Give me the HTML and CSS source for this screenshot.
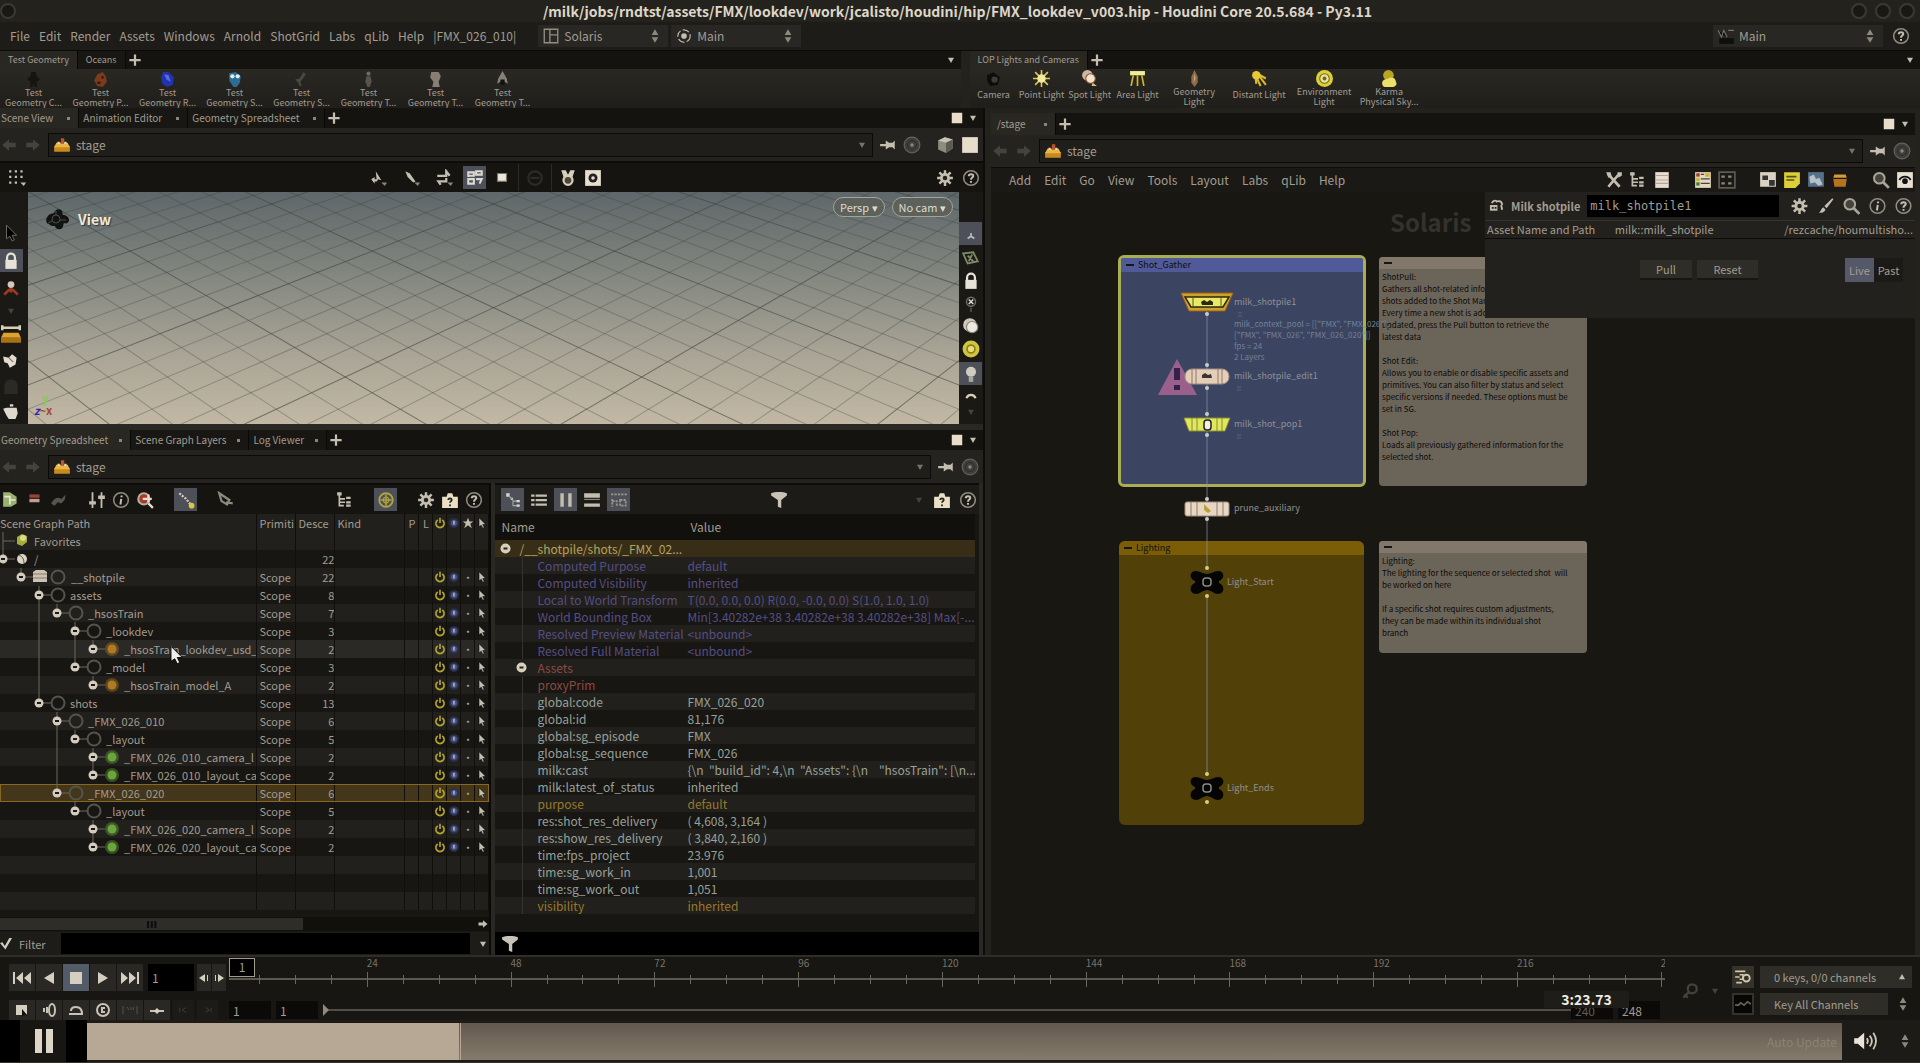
FILE: index.html
```html
<!DOCTYPE html>
<html lang="en">

<head>
    <meta charset="UTF-8">
    <meta name="viewport" content="width=device-width, initial-scale=1.0">
    <title>FMX_lookdev_v003.hip - Houdini Core</title>
    <link rel="stylesheet" href="styles.css">
</head>

<body>
    <!-- Icon set, used everywhere through <use> -->
    <svg class="sprite" aria-hidden="true">
        <symbol id="i-back" viewBox="0 0 16 16"><path fill="currentColor" d="M2 8l6-5v3h6v4H8v3z"/></symbol>
        <symbol id="i-fwd" viewBox="0 0 16 16"><path fill="currentColor" d="M14 8L8 3v3H2v4h6v3z"/></symbol>
        <symbol id="i-stage" viewBox="0 0 16 16"><path fill="#c98a1c" d="M1 9h14v5H1z"/><path fill="#e9b64a" d="M3 6h10l2 4H1z"/><path fill="#b9552f" d="M7 2h3v5H7z"/><path fill="#e8d9b0" d="M4 5h2v2H4zM10 5h2v2h-2z"/></symbol>
        <symbol id="i-pin" viewBox="0 0 16 16"><path fill="currentColor" d="M1 7h5V4l3 2h3l2-2v8l-2-2H9l-3 2V9H1z"/></symbol>
        <symbol id="i-target" viewBox="0 0 16 16"><circle cx="8" cy="8" r="7" fill="#3f3f3c" stroke="#62625d"/><circle cx="8" cy="8" r="4" fill="none" stroke="#2d2d2b"/><circle cx="8" cy="8" r="1.500" fill="#888"/></symbol>
        <symbol id="i-cube" viewBox="0 0 16 16"><path fill="#8e8b80" d="M1 4l6-3 7 2v8l-6 4-7-3z"/><path fill="#c9c4b8" d="M1 4l7 2 6-3-7-2z"/><path fill="#5d5b54" d="M8 6v9l6-4V3z"/></symbol>
        <symbol id="i-square" viewBox="0 0 16 16"><path fill="#e8dccb" d="M1 1h14v14H1z"/></symbol>
        <symbol id="i-plus" viewBox="0 0 16 16"><path fill="currentColor" d="M7 3h2v4h4v2H9v4H7V9H3V7h4z"/></symbol>
        <symbol id="i-down" viewBox="0 0 16 16"><path fill="currentColor" d="M4 5h8l-4 7z"/></symbol>
        <symbol id="i-up" viewBox="0 0 16 16"><path fill="currentColor" d="M4 11h8L8 4z"/></symbol>
        <symbol id="i-updown" viewBox="0 0 16 16"><path fill="#8d887c" d="M5 7h6L8 2zM5 9h6l-3 5z"/></symbol>
        <symbol id="i-gear" viewBox="0 0 16 16"><path stroke="currentColor" stroke-width="2.200" d="M8 1v14M1 8h14M3 3l10 10M13 3L3 13"/><circle cx="8" cy="8" r="4.500" fill="currentColor"/><circle cx="8" cy="8" r="2" fill="#24231f"/></symbol>
        <symbol id="i-help" viewBox="0 0 16 16"><circle cx="8" cy="8" r="6.500" fill="none" stroke="#8f8b80" stroke-width="1.400"/><path fill="none" stroke="currentColor" stroke-width="1.800" d="M6 6.500C6 4 10.200 4 10 6.300 9.800 7.700 8 7.600 8 9.500M8 10.700v1.600"/></symbol>
        <symbol id="i-info" viewBox="0 0 16 16"><circle cx="8" cy="8" r="6.500" fill="none" stroke="#8f8b80" stroke-width="1.400"/><path stroke="currentColor" stroke-width="1.800" d="M8.500 4v1.600M8.200 7l-.7 5"/></symbol>
        <symbol id="i-dots" viewBox="0 0 16 16"><path fill="currentColor" d="M1 1h2v2H1zM6 1h2v2H6zM11 1h2v2h-2zM1 6h2v2H1zM6 6h2v2H6zM11 6h2v2h-2zM1 11h2v2H1zM6 11h2v2H6zM11 12h5l-2 3z"/></symbol>
        <symbol id="i-tool-a" viewBox="0 0 16 16"><path fill="currentColor" d="M6 2l5 8-3-1-1 2zM2 9l3-2v2h2v2H5v2z"/><path fill="#8a867a" d="M11 12h5l-2 3z"/></symbol>
        <symbol id="i-tool-b" viewBox="0 0 16 16"><path fill="currentColor" d="M3 2l4 2 5 7-2 1-5-5z"/><path fill="#8a867a" d="M11 12h5l-2 3z"/></symbol>
        <symbol id="i-tool-c" viewBox="0 0 16 16"><path fill="none" stroke="currentColor" stroke-width="2" d="M2 6h8V2l3 4M10 8v3H3l2 3"/><path fill="#8a867a" d="M11 12h5l-2 3z"/></symbol>
        <symbol id="i-mesh" viewBox="0 0 16 16"><path fill="none" stroke="#dcdad2" stroke-width="1.800" d="M2 7V3h5v3H2M9 6V2h5v3H9M2 13V9h5v4zM9 9h5l-2 4"/></symbol>
        <symbol id="i-box" viewBox="0 0 16 16"><path fill="#eee6d8" stroke="#77746a" d="M4 4h8v7H4z"/></symbol>
        <symbol id="i-medal" viewBox="0 0 16 16"><path fill="#d8cfbc" d="M2 1h4l2 4 2-4h4l-2 6H4z"/><circle cx="8" cy="10" r="4" fill="#4d4637" stroke="#d8cfbc" stroke-width="2"/></symbol>
        <symbol id="i-camset" viewBox="0 0 16 16"><path fill="#e8dfcf" d="M1 1h14v14H1z"/><circle cx="8" cy="8" r="4" fill="#222"/><circle cx="8" cy="8" r="1.600" fill="#e8dfcf"/></symbol>
        <symbol id="i-dim" viewBox="0 0 16 16"><circle cx="8" cy="8" r="6" fill="none" stroke="#2c2b27" stroke-width="2"/><path stroke="#2c2b27" stroke-width="2" d="M4 8h8"/></symbol>
        <symbol id="i-cursor" viewBox="0 0 16 16"><path fill="currentColor" stroke="#000" stroke-width=".7" d="M4 1v12l3-2 2 4 2-1-2-4h4z"/></symbol>
        <symbol id="i-cursor-dark" viewBox="0 0 16 16"><path fill="#000" stroke="#77746b" stroke-width=".8" d="M4 1v12l3-2 2 4 2-1-2-4h4z"/></symbol>
        <symbol id="i-lock" viewBox="0 0 16 16"><path fill="none" stroke="#e6e2d8" stroke-width="2" d="M4.500 8V5a3.500 3.500 0 017 0v3"/><path fill="#e6e2d8" d="M3 7h10v8H3z"/></symbol>
        <symbol id="i-pose" viewBox="0 0 16 16"><circle cx="8" cy="4" r="3" fill="#d8c6b8"/><path fill="none" stroke="#9c3a20" stroke-width="2.500" d="M2 13l4-4h4l4 4M8 7v4"/></symbol>
        <symbol id="i-brick" viewBox="0 0 16 16"><path fill="#d8cfb8" d="M0 1h2v1h12V1h2v4h-2V4H2v1H0z"/><path fill="#e0a22c" d="M2 7h12l2 4H0z"/><path fill="#a87214" d="M0 11h16v4H0z"/></symbol>
        <symbol id="i-stamp" viewBox="0 0 16 16"><path fill="#e3dccf" d="M1 4l5 1 3-3 4 3-1 6-5 3-2-4-3-1z"/><path stroke="#77716a" d="M6 5l4 4"/></symbol>
        <symbol id="i-ghost" viewBox="0 0 16 16"><path fill="#2b2a25" d="M2 15V8a6 6 0 0112 0v7z"/></symbol>
        <symbol id="i-pot" viewBox="0 0 16 16"><path fill="#ded9cc" d="M4 5h9l1 5-2 5H6L4 12 1 6zM7 2h3v2H7z"/></symbol>
        <symbol id="i-hand" viewBox="0 0 16 16"><path fill="none" stroke="#7d8a66" stroke-width="1.600" d="M1 3l9-1 4 8-9 2zM5 5l5 5M9 4l-3 6"/></symbol>
        <symbol id="i-bulbx" viewBox="0 0 16 16"><circle cx="8" cy="6" r="4" fill="none" stroke="#6d6a61" stroke-width="1.300"/><path stroke="#ddd" stroke-width="1.300" d="M6 4l4 4M10 4L6 8"/><path stroke="#6d6a61" d="M8 11v4"/></symbol>
        <symbol id="i-ball" viewBox="0 0 16 16"><circle cx="7" cy="7" r="6" fill="#cfc8ba"/><circle cx="9" cy="9" r="5" fill="#eee9de" stroke="#8a8579"/></symbol>
        <symbol id="i-ylamp" viewBox="0 0 16 16"><circle cx="8" cy="8" r="7.500" fill="#d0c53c"/><circle cx="8" cy="8" r="3.500" fill="#e6de7b" stroke="#8b821a" stroke-width="1.500"/></symbol>
        <symbol id="i-bulb" viewBox="0 0 16 16"><circle cx="8" cy="6" r="4.500" fill="#cfccbf"/><path fill="#aaa89c" d="M6 10h4v5H6z"/></symbol>
        <symbol id="i-arc" viewBox="0 0 16 16"><path fill="none" stroke="#d6d0b5" stroke-width="3" d="M2 11c2-6 10-6 12 0"/></symbol>
        <symbol id="i-axis" viewBox="0 0 16 16"><path stroke="#b9bcc6" stroke-width="1.500" d="M8 10V7M8 10l3 2M8 10l-3 2"/></symbol>
        <symbol id="i-prims" viewBox="0 0 16 16"><path fill="#9bb070" d="M1 1h6l6 4v6l-5 3H1z"/><path stroke="#e6e8d2" stroke-width="1.500" fill="none" d="M2 5h5v7M7 8h5"/></symbol>
        <symbol id="i-red" viewBox="0 0 16 16"><path fill="#93473c" d="M3 3h9v3H3z"/><path fill="#c99a8f" d="M3 7h9v3H3z"/></symbol>
        <symbol id="i-dolphin" viewBox="0 0 16 16"><path fill="#55544d" d="M1 11c3-5 6-6 9-4l4-4-1 5-3 3-3-1-3 3z"/></symbol>
        <symbol id="i-sliders" viewBox="0 0 16 16"><path stroke="currentColor" stroke-width="1.600" d="M4 1v14M12 1v14"/><path fill="currentColor" d="M1 9h6v3H1zM9 4h6v3H9z"/></symbol>
        <symbol id="i-find" viewBox="0 0 16 16"><circle cx="6.500" cy="6.500" r="4.700" fill="#45433d" stroke="#aaa598" stroke-width="1.800"/><path stroke="#aaa598" stroke-width="2.500" d="M10 10l5 5"/></symbol>
        <symbol id="i-findred" viewBox="0 0 16 16"><circle cx="7" cy="7" r="5" fill="#a33c2a" stroke="#b9b0a5" stroke-width="1.800"/><path stroke="#e6ddd0" stroke-width="2" d="M11 11l4 4M6 7h8M11 3v7"/></symbol>
        <symbol id="i-chain" viewBox="0 0 16 16"><path stroke="#cfcbbb" stroke-width="2" stroke-dasharray="2 1" d="M2 2l6 5 5 6"/><circle cx="13" cy="13" r="2.500" fill="#d9c840"/></symbol>
        <symbol id="i-nodes" viewBox="0 0 16 16"><path fill="#dcd9cf" d="M2 2h3v3H2zM6 6h2v2H6zM11 8h3v2h-3zM11 12h3v2h-3z"/><path fill="none" stroke="#a9a698" d="M4 4l4 4v5h3M8 9h3"/></symbol>
        <symbol id="i-tag" viewBox="0 0 16 16"><path fill="none" stroke="#8d897d" stroke-width="2" d="M2 2l9 6-2 4-5-3zM8 10l6 1"/></symbol>
        <symbol id="i-tree" viewBox="0 0 16 16"><path fill="none" stroke="currentColor" stroke-width="1.500" d="M3 3v10h4M3 7h5M3 10h5"/><path fill="currentColor" d="M1 1h4v3H1zM9 5h4v2H9zM9 9h4v2H9zM9 12h4v2H9z"/></symbol>
        <symbol id="i-globe" viewBox="0 0 16 16"><circle cx="8" cy="8" r="6" fill="none" stroke="#b0a43e" stroke-width="1.600"/><path stroke="#b0a43e" fill="none" stroke-width="1.300" d="M3 8h10M8 3v10"/><circle cx="8" cy="8" r="2.500" fill="none" stroke="#b0a43e"/></symbol>
        <symbol id="i-camhelp" viewBox="0 0 16 16"><path fill="#ece0c4" d="M1 5h4l1-3h4l1 3h4v10H1z"/><path fill="none" stroke="#222" stroke-width="1.600" d="M6.500 8c0-2 3-2 3 0 0 1-1.500 1-1.500 2.500M8 12v1.500"/></symbol>
        <symbol id="i-list" viewBox="0 0 16 16"><path fill="currentColor" d="M1 3h3v2H1zM5 3h10v2H5zM1 7h3v2H1zM5 7h10v2H5zM1 11h3v2H1zM5 11h10v2H5z"/></symbol>
        <symbol id="i-cols" viewBox="0 0 16 16"><path fill="currentColor" d="M3 2h3v12H3zM10 2h3v12h-3z"/></symbol>
        <symbol id="i-rows" viewBox="0 0 16 16"><path fill="currentColor" d="M1 2h14v4H1zM1 11h14v3H1z"/><path fill="#8c8878" d="M1 7h14v1H1z"/></symbol>
        <symbol id="i-grid" viewBox="0 0 16 16"><path fill="none" stroke="#9a978c" stroke-width="1.600" stroke-dasharray="2 1" d="M1 3h14M2 7v7M2 9h4v5M9 8h5v5H9z"/></symbol>
        <symbol id="i-funnel" viewBox="0 0 16 16"><path fill="#c9c3b7" d="M1 2c3-1.500 11-1.500 14 0v2l-5 4v7l-3-1V8L1 4z"/></symbol>
        <symbol id="i-power" viewBox="0 0 16 16"><path fill="none" stroke="#b3a42b" stroke-width="2.200" d="M5 4a5.500 5.500 0 106 0M8 1v7"/></symbol>
        <symbol id="i-eye" viewBox="0 0 16 16"><circle cx="8" cy="8" r="6.500" fill="#2a3153"/><circle cx="8" cy="8" r="4" fill="#4c5580"/><path fill="#b5b9d0" d="M7 5h2v5H7z"/></symbol>
        <symbol id="i-star" viewBox="0 0 16 16"><path fill="currentColor" d="M8 1l2 5h5l-4 3 2 6-5-4-5 4 2-6-4-3h5z"/></symbol>
        <symbol id="i-tools" viewBox="0 0 16 16"><path stroke="currentColor" stroke-width="2.400" d="M3 3l10 11M13 2L3 14"/><path fill="currentColor" d="M1 1h4l1 4-3 1zM11 1h4v3l-3 2z"/></symbol>
        <symbol id="i-sheet" viewBox="0 0 16 16"><path fill="#e9dfd0" d="M2 1h12v14H2z"/><path stroke="#b5a598" d="M2 4h12M2 8h12M2 11h12"/></symbol>
        <symbol id="i-palette" viewBox="0 0 16 16"><path fill="#e3d7bd" d="M1 1h14v14H1z"/><path fill="#a03b2c" d="M2 2h3v3H2z"/><path fill="#cfb32f" d="M2 6h3v3H2zM10 2h4v3h-4z"/><path fill="#4c7a3d" d="M2 10h3v3H2z"/><path stroke="#444" d="M6 3h3M6 7h8M6 11h8"/></symbol>
        <symbol id="i-gridbox" viewBox="0 0 16 16"><path fill="none" stroke="#5d5a52" stroke-width="1.500" d="M1 1h14v14H1z"/><path fill="#8a867a" d="M3 4h3v2H3zM9 4h3v2H9zM3 10h3v2H3zM9 10h3v2H9z"/></symbol>
        <symbol id="i-netbox" viewBox="0 0 16 16"><path fill="#d9d2c4" d="M1 1h14v13H1z"/><path fill="#333" d="M3 4h5v4H3zM9 8h5v5H9z"/></symbol>
        <symbol id="i-note" viewBox="0 0 16 16"><path fill="#dccf38" d="M1 1h14v10l-4 4H1z"/><path stroke="#555020" stroke-width="1.500" d="M3 5h9M3 8h7"/></symbol>
        <symbol id="i-image" viewBox="0 0 16 16"><path fill="#56708c" d="M1 1h14v13H1z"/><path fill="#b6c0c8" d="M2 5l4-2 2 4 3-1 3 6-4 1-3-3-4 1z"/></symbol>
        <symbol id="i-basket" viewBox="0 0 16 16"><path fill="#b5731c" d="M2 7h12l-1 7H3z"/><path fill="#d39a3e" d="M3 3h10l1 3H2z"/></symbol>
        <symbol id="i-home" viewBox="0 0 16 16"><path fill="#e8e0d2" d="M1 1h14v14H1z"/><path fill="none" stroke="#111" stroke-width="1.600" d="M3 8c2-4 8-4 10 0"/><circle cx="8" cy="9" r="2.500" fill="#111"/></symbol>
        <symbol id="i-brush" viewBox="0 0 16 16"><path fill="currentColor" d="M14 1l1 1-6 8-2-2zM6 9l2 2c-1 3-4 3-6 3 2-1 2-4 4-5z"/></symbol>
        <symbol id="i-key" viewBox="0 0 16 16"><circle cx="10" cy="6" r="4" fill="none" stroke="currentColor" stroke-width="2"/><path stroke="currentColor" stroke-width="2" d="M7 9l-5 5M3 11l3 3"/></symbol>
        <symbol id="i-pile" viewBox="0 0 16 16"><path fill="currentColor" d="M1 7h8v6H1z"/><path fill="none" stroke="currentColor" stroke-width="2" d="M3 5c2-4 5-3 6-1M9 3c4-1 5 2 5 4M13 7l1 5"/><path fill="#23211d" d="M3 9h2v2H3zM6 9h2v2H6z"/></symbol>
        <symbol id="i-chan" viewBox="0 0 16 16"><path fill="none" stroke="#cfc9a8" stroke-width="1.400" d="M1 3h9M1 8h4M2 13h5M5 6h3v4H5"/><circle cx="11" cy="9" r="3" fill="none" stroke="#cfc9a8" stroke-width="1.600"/></symbol>
        <symbol id="i-wave" viewBox="0 0 16 16"><path fill="#070706" d="M0 0h16v16H0z"/><path fill="none" stroke="#65645c" stroke-width="1.500" d="M1 9h3l2-2 3 2 3-3 3 2"/></symbol>
        <symbol id="i-desk" viewBox="0 0 16 16"><path fill="none" stroke="#918d81" stroke-width="1.200" d="M2 2h12v12H2zM7 2v12M7 7h7"/></symbol>
        <symbol id="i-radial" viewBox="0 0 16 16"><circle cx="8" cy="8" r="5.500" fill="none" stroke="currentColor" stroke-dasharray="6 2"/><circle cx="8" cy="8" r="2.500" fill="currentColor"/></symbol>
        <symbol id="i-take" viewBox="0 0 16 16"><path stroke="#77736a" d="M1 3l3 6 2-6 3 6M10 3h5"/><path fill="#0e0e0c" d="M2 10h13v5H2z"/></symbol>
        <!-- test geometry -->
        <symbol id="g-crag" viewBox="0 0 16 16"><path fill="#15140f" d="M6 1h4l1 4 3 3-3 2v5H9l-1-4-1 4H5v-5L2 8l3-3z"/></symbol>
        <symbol id="g-pig" viewBox="0 0 16 16"><path fill="#7c3a1e" d="M5 3l5-2 3 4 1 5-4 5-5-1-3-5z"/><path fill="#24170f" d="M9 5h2v2H9zM5 10h3v2H5z"/></symbol>
        <symbol id="g-rubber" viewBox="0 0 16 16"><path fill="#2233b0" d="M4 1h5l5 5-1 7-5 2-5-3-1-6z"/><path fill="#5a6be0" d="M5 3l4 1 2 6-4-2z"/></symbol>
        <symbol id="g-squab" viewBox="0 0 16 16"><path fill="#2d6c94" d="M3 2l6-1 5 4-1 6-3 4H7L3 9z"/><circle cx="6" cy="5" r="2" fill="#e3eef0"/><circle cx="11" cy="5" r="2" fill="#e3eef0"/></symbol>
        <symbol id="g-bug" viewBox="0 0 16 16"><path fill="#4a4841" d="M10 1l2 2-2 3-3 4 1 4H6l-1-3-3-3 4-1z"/></symbol>
        <symbol id="g-man" viewBox="0 0 16 16"><circle cx="8" cy="2.500" r="2" fill="#6d6a62"/><path fill="#57544d" d="M6 5h4l1 5-2 5H7l-2-5z"/></symbol>
        <symbol id="g-head" viewBox="0 0 16 16"><path fill="#877f73" d="M4 1h7l2 4-2 5 1 5H5l1-5-3-4z"/></symbol>
        <symbol id="g-bust" viewBox="0 0 16 16"><path fill="#85807a" d="M8 0l4 7 1 5-3-2H6l-3 2 1-5z"/><path fill="#14130f" d="M6 8h4v5H6z"/></symbol>
        <!-- lights -->
        <symbol id="l-cam" viewBox="0 0 16 16"><path fill="#0d0c0a" d="M2 5l6-3 6 5-2 7-7 1-3-5z"/><circle cx="9" cy="9" r="3" fill="#3c3b38"/></symbol>
        <symbol id="l-point" viewBox="0 0 16 16"><path stroke="#d9c95a" stroke-width="1.500" d="M8 0v16M0 8h16M2 2l12 12M14 2L2 14"/><circle cx="8" cy="8" r="4" fill="#f2e99c"/></symbol>
        <symbol id="l-spot" viewBox="0 0 16 16"><circle cx="6" cy="5" r="5" fill="#c9b7a0"/><circle cx="9" cy="8" r="4.500" fill="#efe4cf" stroke="#8a4a30"/><path fill="#d5c580" d="M11 12l4 3h-5z"/></symbol>
        <symbol id="l-area" viewBox="0 0 16 16"><path fill="#f3ee96" d="M1 1h14v4H1z"/><path stroke="#cdb52c" stroke-width="1.600" d="M4 5l-2 10M8 5v10M12 5l2 10"/></symbol>
        <symbol id="l-geo" viewBox="0 0 16 16"><path fill="#8a6b4a" d="M8 0l3 6v6l-3 4-3-4V6z"/><path fill="#c8a77d" d="M8 3l1 5-2 4z"/></symbol>
        <symbol id="l-dist" viewBox="0 0 16 16"><path stroke="#d6b82b" stroke-width="2" d="M3 2l6 13M5 2l9 12M4 4l1 9M7 4l7 4"/><circle cx="5" cy="5" r="4" fill="#e5ca35"/></symbol>
        <symbol id="l-env" viewBox="0 0 16 16"><circle cx="8" cy="8" r="8" fill="#dfcf35"/><circle cx="8" cy="8" r="4.500" fill="#e9e3a0" stroke="#6d6720"/><circle cx="8" cy="8" r="1.800" fill="#6d6720"/></symbol>
        <symbol id="l-sky" viewBox="0 0 16 16"><circle cx="7" cy="5" r="5" fill="#b9a524"/><path fill="#ecdf6a" d="M1 12c1-4 4-3 6-4 2-2 7-1 7 3 2 3-1 5-4 5H4c-2 0-3-2-3-4z"/></symbol>
    </svg>

    <header class="titlebar">
        <span class="win-dots"><i></i></span>
        <h1>/milk/jobs/rndtst/assets/FMX/lookdev/work/jcalisto/houdini/hip/FMX_lookdev_v003.hip - Houdini Core 20.5.684 - Py3.11</h1>
        <span class="win-dots right"><i></i><i></i><i></i></span>
    </header>

    <nav class="menubar">
        <a href="#">File</a><a href="#">Edit</a><a href="#">Render</a><a href="#">Assets</a><a href="#">Windows</a><a href="#">Arnold</a><a href="#">ShotGrid</a><a href="#">Labs</a><a href="#">qLib</a><a href="#">Help</a>
        <span class="shot">|FMX_026_010|</span>
        <label class="combo"><svg class="ic"><use href="#i-desk"/></svg><select aria-label="Desktop"><option>Solaris</option></select><svg class="ic"><use href="#i-updown"/></svg></label>
        <label class="combo"><svg class="ic"><use href="#i-radial"/></svg><select aria-label="Radial menu"><option>Main</option></select><svg class="ic"><use href="#i-updown"/></svg></label>
        <label class="combo combo-take"><svg class="ic"><use href="#i-take"/></svg><select aria-label="Take"><option>Main</option></select><svg class="ic"><use href="#i-updown"/></svg></label>
        <button class="btn-ic" aria-label="Help"><svg class="ic"><use href="#i-help"/></svg></button>
    </nav>

    <section class="shelves">
        <div class="shelf shelf-left">
            <div class="tabs">
                <button class="tab active">Test Geometry</button><button class="tab">Oceans</button>
                <button class="btn-ic add" aria-label="Add shelf"><svg class="ic"><use href="#i-plus"/></svg></button>
                <button class="btn-ic end" aria-label="Shelf menu"><svg class="ic sm"><use href="#i-down"/></svg></button>
            </div>
            <div class="shelf-items even">
                <button><svg class="ic"><use href="#g-crag"/></svg>Test<br>Geometry C...</button>
                <button><svg class="ic"><use href="#g-pig"/></svg>Test<br>Geometry P...</button>
                <button><svg class="ic"><use href="#g-rubber"/></svg>Test<br>Geometry R...</button>
                <button><svg class="ic"><use href="#g-squab"/></svg>Test<br>Geometry S...</button>
                <button><svg class="ic"><use href="#g-bug"/></svg>Test<br>Geometry S...</button>
                <button><svg class="ic"><use href="#g-man"/></svg>Test<br>Geometry T...</button>
                <button><svg class="ic"><use href="#g-head"/></svg>Test<br>Geometry T...</button>
                <button><svg class="ic"><use href="#g-bust"/></svg>Test<br>Geometry T...</button>
            </div>
        </div>
        <div class="shelf shelf-right">
            <div class="tabs">
                <button class="tab active">LOP Lights and Cameras</button>
                <button class="btn-ic add" aria-label="Add shelf"><svg class="ic"><use href="#i-plus"/></svg></button>
                <button class="btn-ic end" aria-label="Shelf menu"><svg class="ic sm"><use href="#i-down"/></svg></button>
            </div>
            <div class="shelf-items">
                <button class="single"><svg class="ic"><use href="#l-cam"/></svg>Camera</button>
                <button class="single"><svg class="ic"><use href="#l-point"/></svg>Point Light</button>
                <button class="single"><svg class="ic"><use href="#l-spot"/></svg>Spot Light</button>
                <button class="single"><svg class="ic"><use href="#l-area"/></svg>Area Light</button>
                <button class="wide"><svg class="ic"><use href="#l-geo"/></svg>Geometry<br>Light</button>
                <button class="wide single"><svg class="ic"><use href="#l-dist"/></svg>Distant Light</button>
                <button class="wide"><svg class="ic"><use href="#l-env"/></svg>Environment<br>Light</button>
                <button class="wide"><svg class="ic"><use href="#l-sky"/></svg>Karma<br>Physical Sky...</button>
            </div>
        </div>
    </section>

    <main class="desk">
        <div class="left">
            <section class="scene">
                <div class="tabs">
                    <button class="tab active">Scene View <i></i></button><button class="tab">Animation Editor <i></i></button><button class="tab">Geometry Spreadsheet <i></i></button>
                    <button class="btn-ic add" aria-label="New tab"><svg class="ic"><use href="#i-plus"/></svg></button>
                    <button class="btn-ic end" aria-label="Maximize"><svg class="ic xs"><use href="#i-square"/></svg></button>
                    <button class="btn-ic" aria-label="Pane menu"><svg class="ic sm"><use href="#i-down"/></svg></button>
                </div>
                <div class="path">
                    <svg class="ic dim"><use href="#i-back"/></svg><svg class="ic dim"><use href="#i-fwd"/></svg>
                    <button class="path-field"><svg class="ic"><use href="#i-stage"/></svg>stage<svg class="ic sm"><use href="#i-down"/></svg></button>
                    <svg class="ic"><use href="#i-pin"/></svg><svg class="ic"><use href="#i-target"/></svg>
                    <span class="gap"></span><svg class="ic"><use href="#i-cube"/></svg><svg class="ic"><use href="#i-square"/></svg>
                </div>
                <div class="toolbar view-tools">
                    <svg class="ic"><use href="#i-dots"/></svg>
                    <div class="group mid">
                        <svg class="ic"><use href="#i-tool-a"/></svg><svg class="ic"><use href="#i-tool-b"/></svg><svg class="ic"><use href="#i-tool-c"/></svg>
                    </div>
                    <div class="group tight">
                        <span class="on"><svg class="ic"><use href="#i-mesh"/></svg></span><svg class="ic"><use href="#i-box"/></svg>
                        <span class="bar"></span><svg class="ic"><use href="#i-dim"/></svg><span class="bar"></span>
                        <svg class="ic"><use href="#i-medal"/></svg><svg class="ic"><use href="#i-camset"/></svg>
                    </div>
                    <svg class="ic end"><use href="#i-gear"/></svg><svg class="ic"><use href="#i-help"/></svg>
                </div>
                <div class="view-row">
                    <div class="side side-left">
                        <svg class="ic"><use href="#i-cursor-dark"/></svg>
                        <span class="on"><svg class="ic"><use href="#i-lock"/></svg></span>
                        <svg class="ic"><use href="#i-pose"/></svg>
                        <svg class="ic xs dim"><use href="#i-down"/></svg>
                        <svg class="ic big"><use href="#i-brick"/></svg>
                        <svg class="ic"><use href="#i-stamp"/></svg>
                        <svg class="ic"><use href="#i-ghost"/></svg>
                        <svg class="ic"><use href="#i-pot"/></svg>
                    </div>
                    <div class="viewport">
                        <svg class="ground" viewBox="28 193 930 231" preserveAspectRatio="xMidYMid slice"></svg>
                        <div class="view-name"><svg viewBox="0 0 26 24"><path fill="#121311" d="M4 9c2-3 5-2 6-3 1-4 6-5 8-2 1 2 0 3 1 4 3 0 6 2 6 5s-3 4-5 3c-1 1 0 4-3 6-3 1-6-1-6-3-2 0-5 0-6-2-3 0-4-5-1-8z"/><g fill="none" stroke="#4a4f4c"><circle cx="12" cy="12" r="4"/><path d="M12 8V4M8 14l-4 2M16 13h6"/></g></svg>View</div>
                        <div class="pills"><button>Persp ▾</button><button>No cam ▾</button></div>
                        <div class="axes"><b>y</b><span><i>z</i>~x</span></div>
                    </div>
                    <div class="side side-right">
                        <span class="on"><svg class="ic"><use href="#i-axis"/></svg></span>
                        <svg class="ic"><use href="#i-hand"/></svg>
                        <svg class="ic"><use href="#i-lock"/></svg>
                        <svg class="ic"><use href="#i-bulbx"/></svg>
                        <svg class="ic"><use href="#i-ball"/></svg>
                        <svg class="ic"><use href="#i-ylamp"/></svg>
                        <span class="on"><svg class="ic"><use href="#i-bulb"/></svg></span>
                        <svg class="ic xs"><use href="#i-arc"/></svg>
                        <svg class="ic xs dim"><use href="#i-down"/></svg>
                    </div>
                </div>
            </section>

            <section class="sheet">
                <div class="tabs">
                    <button class="tab active">Geometry Spreadsheet <i></i></button><button class="tab">Scene Graph Layers <i></i></button><button class="tab">Log Viewer <i></i></button>
                    <button class="btn-ic add" aria-label="New tab"><svg class="ic"><use href="#i-plus"/></svg></button>
                    <button class="btn-ic end" aria-label="Maximize"><svg class="ic xs"><use href="#i-square"/></svg></button>
                    <button class="btn-ic" aria-label="Pane menu"><svg class="ic sm"><use href="#i-down"/></svg></button>
                </div>
                <div class="path">
                    <svg class="ic dim"><use href="#i-back"/></svg><svg class="ic dim"><use href="#i-fwd"/></svg>
                    <button class="path-field"><svg class="ic"><use href="#i-stage"/></svg>stage<svg class="ic sm"><use href="#i-down"/></svg></button>
                    <svg class="ic"><use href="#i-pin"/></svg><svg class="ic"><use href="#i-target"/></svg>
                </div>
                <div class="sheet-body">
                    <div class="graph">
                        <div class="toolbar graph-tools">
                            <div class="group"><svg class="ic"><use href="#i-prims"/></svg><svg class="ic"><use href="#i-red"/></svg><svg class="ic"><use href="#i-dolphin"/></svg></div>
                            <div class="group"><svg class="ic"><use href="#i-sliders"/></svg><svg class="ic"><use href="#i-info"/></svg><svg class="ic"><use href="#i-findred"/></svg></div>
                            <span class="on"><svg class="ic"><use href="#i-chain"/></svg></span>
                            <svg class="ic"><use href="#i-tag"/></svg>
                            <svg class="ic end"><use href="#i-tree"/></svg>
                            <span class="on"><svg class="ic"><use href="#i-globe"/></svg></span>
                            <div class="group"><svg class="ic"><use href="#i-gear"/></svg><svg class="ic"><use href="#i-camhelp"/></svg><svg class="ic"><use href="#i-help"/></svg></div>
                        </div>
                        <div class="tree-wrap">
                            <table class="tree">
                                <colgroup><col><col class="c-prim"><col class="c-desc"><col class="c-kind"><col class="c-flag"><col class="c-flag"><col class="c-flag"><col class="c-flag"><col class="c-flag"><col class="c-flag"></colgroup>
                                <thead><tr><th>Scene Graph Path</th><th>Primiti</th><th>Desce</th><th>Kind</th><th>P</th><th>L</th><th><svg class="ic sm"><use href="#i-power"/></svg></th><th><svg class="ic sm"><use href="#i-eye"/></svg></th><th><svg class="ic sm"><use href="#i-star"/></svg></th><th><svg class="ic sm"><use href="#i-cursor"/></svg></th></tr></thead>
                                <tbody id="treeRows"></tbody>
                            </table>
                            <svg class="mouse" viewBox="0 0 16 16"><use href="#i-cursor"/></svg>
                        </div>
                        <div class="hscroll"><div class="thumb">ııı</div><svg class="ic sm"><use href="#i-fwd"/></svg></div>
                        <div class="filter"><input id="filterOn" type="checkbox" checked><label for="filterOn">Filter</label><input type="text" aria-label="Filter text"><svg class="ic sm"><use href="#i-down"/></svg></div>
                    </div>
                    <div class="attrs">
                        <div class="toolbar attr-tools">
                            <span class="on"><svg class="ic"><use href="#i-nodes"/></svg></span><svg class="ic"><use href="#i-list"/></svg><span class="on"><svg class="ic"><use href="#i-cols"/></svg></span><svg class="ic"><use href="#i-rows"/></svg><span class="on"><svg class="ic"><use href="#i-grid"/></svg></span>
                            <svg class="ic funnel"><use href="#i-funnel"/></svg>
                            <svg class="ic sm dim end"><use href="#i-down"/></svg><svg class="ic"><use href="#i-camhelp"/></svg><svg class="ic"><use href="#i-help"/></svg>
                        </div>
                        <div class="attr-wrap">
                            <table class="attr">
                                <colgroup><col class="c-name"><col></colgroup>
                                <thead><tr><th>Name</th><th>Value</th></tr></thead>
                                <tbody id="attrRows"></tbody>
                            </table>
                        </div>
                        <label class="attr-filter"><svg class="ic"><use href="#i-funnel"/></svg><input type="text" aria-label="Filter attributes"></label>
                    </div>
                </div>
            </section>
        </div>

        <section class="network">
            <div class="tabs">
                <button class="tab active">/stage <i></i></button>
                <button class="btn-ic add" aria-label="New tab"><svg class="ic"><use href="#i-plus"/></svg></button>
                <button class="btn-ic end" aria-label="Maximize"><svg class="ic xs"><use href="#i-square"/></svg></button>
                <button class="btn-ic" aria-label="Pane menu"><svg class="ic sm"><use href="#i-down"/></svg></button>
            </div>
            <div class="path">
                <svg class="ic dim"><use href="#i-back"/></svg><svg class="ic dim"><use href="#i-fwd"/></svg>
                <button class="path-field"><svg class="ic"><use href="#i-stage"/></svg>stage<svg class="ic sm"><use href="#i-down"/></svg></button>
                <svg class="ic"><use href="#i-pin"/></svg><svg class="ic"><use href="#i-target"/></svg>
            </div>
            <nav class="net-menu">
                <a href="#">Add</a><a href="#">Edit</a><a href="#">Go</a><a href="#">View</a><a href="#">Tools</a><a href="#">Layout</a><a href="#">Labs</a><a href="#">qLib</a><a href="#">Help</a>
                <div class="group"><svg class="ic"><use href="#i-tools"/></svg><svg class="ic"><use href="#i-tree"/></svg><svg class="ic"><use href="#i-sheet"/></svg></div>
                <div class="group"><svg class="ic"><use href="#i-palette"/></svg><svg class="ic"><use href="#i-gridbox"/></svg></div>
                <div class="group"><svg class="ic"><use href="#i-netbox"/></svg><svg class="ic"><use href="#i-note"/></svg><svg class="ic"><use href="#i-image"/></svg><svg class="ic"><use href="#i-basket"/></svg></div>
                <div class="group"><svg class="ic"><use href="#i-find"/></svg><svg class="ic"><use href="#i-home"/></svg></div>
            </nav>
            <div class="canvas">
                <span class="watermark">Solaris</span>

                <div class="netbox gather"><h2><b></b>Shot_Gather</h2></div>
                <div class="netbox lighting"><h2><b></b>Lighting</h2></div>
                <div class="sticky note-shot">
                    <h2><b></b></h2>
                    <p>ShotPull:<br>Gathers all shot-related info<br>shots added to the Shot Man<br>Every time a new shot is add<br>updated, press the Pull button to retrieve the<br>latest data<br><br>Shot Edit:<br>Allows you to enable or disable specific assets and<br>primitives. You can also filter by status and select<br>specific versions if needed. These options must be<br>set in SG.<br><br>Shot Pop:<br>Loads all previously gathered information for the<br>selected shot.</p>
                </div>
                <div class="sticky note-light">
                    <h2><b></b></h2>
                    <p>Lighting:<br>The lighting for the sequence or selected shot  will<br>be worked on here<br><br>If a specific shot requires custom adjustments,<br>they can be made within its individual shot<br>branch</p>
                </div>

                <!-- node shapes and wires share one drawing -->
                <svg class="wires" viewBox="0 0 300 640">
                    <path stroke="#8d93a8" stroke-width="1" opacity=".7" d="M67 62v193M67 269v52M67 349v178"/>
                    <path fill="#9a608c" d="M37 112l20 36H18z"/><path fill="#35204c" d="M34 121h6v12h-6zM34 138h6v5h-6z"/>
                    <g stroke="#5b5a1e"><path fill="#c9a326" stroke="#a5581f" stroke-width="1" d="M41 46h52l-8 18H49z"/><path fill="#ebe769" stroke="#2b2810" stroke-width="1.500" d="M45 50h44l-6 10H51z"/><path d="M53 50v10M81 50v10"/></g>
                    <path fill="#2b2913" d="M61 55l3-2 3 2 3-2 3 2v3H62z"/>
                    <rect x="45" y="122" width="44" height="15" rx="7" fill="#e4cdb9" stroke="#a38f81"/><path stroke="#8d7a6d" d="M52 122v15M56 122v15M78 122v15M82 122v15"/><path fill="#3c342e" d="M62 128l3-2 3 2 3-1 1 4H62z"/>
                    <path fill="#dfe660" stroke="#8a8c2a" d="M44 171h46l-5 13H49z"/><path stroke="#8a8c2a" d="M52 171v13M57 171v13M77 171v13M82 171v13"/><rect x="64" y="173" width="7" height="10" rx="3" fill="#f2eee0" stroke="#222" stroke-width="1.500"/>
                    <rect x="45" y="255" width="44" height="14" rx="2" fill="#e8d6c2" stroke="#9d8e80"/><path stroke="#8d7a6d" d="M51 255v14M57 255v14M77 255v14M83 255v14"/><path fill="#b6a23a" d="M64 257l3 3 4 4-3 2-4-3z"/>
                    <g id="null"><path fill="#050505" d="M56 324c4 0 7 3 11 3s7-3 11-3c7 0 7 8 1 10v2c6 2 6 11-1 11-4 0-7-4-11-4s-7 4-11 4c-7 0-7-9-1-11v-2c-6-2-6-10 1-10z"/><rect x="63" y="331" width="8" height="8" rx="3" fill="none" stroke="#8b8a80" stroke-width="1.500"/></g>
                    <use href="#null" y="206"/>
                    <g fill="#c9c9cf"><circle cx="67" cy="67" r="2"/><circle cx="67" cy="118" r="2"/><circle cx="67" cy="141" r="2"/><circle cx="67" cy="167" r="2"/><circle cx="67" cy="188" r="2"/><circle cx="67" cy="252" r="2"/><circle cx="67" cy="272" r="2"/></g>
                    <g fill="#d6cf7b"><circle cx="67" cy="321" r="2"/><circle cx="67" cy="349" r="2"/><circle cx="67" cy="527" r="2"/><circle cx="67" cy="555" r="2"/></g>
                    <g fill="none" stroke="#5a6478"><path d="M98 66h4M98 69h4M97 140h4M97 143h4M97 188h4M97 191h4"/></g>
                </svg>
                <span class="node-name n-pile">milk_shotpile1</span>
                <p class="node-info">milk_context_pool = [["FMX", "FMX_026"],<br>["FMX", "FMX_026", "FMX_026_020"]]<br>fps = 24<br>2 Layers</p>
                <span class="node-name n-edit">milk_shotpile_edit1</span>
                <span class="node-name n-pop">milk_shot_pop1</span>
                <span class="node-name n-prune">prune_auxiliary</span>
                <span class="node-name n-start">Light_Start</span>
                <span class="node-name n-ends">Light_Ends</span>

                <!-- floating parameter panel -->
                <aside class="params">
                    <div class="params-head">
                        <svg class="ic"><use href="#i-pile"/></svg><label for="nodeName">Milk shotpile</label>
                        <input id="nodeName" type="text" value="milk_shotpile1">
                        <svg class="ic"><use href="#i-gear"/></svg><svg class="ic"><use href="#i-brush"/></svg><svg class="ic"><use href="#i-find"/></svg><svg class="ic"><use href="#i-info"/></svg><svg class="ic"><use href="#i-help"/></svg>
                    </div>
                    <div class="params-path"><span>Asset Name and Path</span><span>milk::milk_shotpile</span><span>/rezcache/houmultisho...</span></div>
                    <div class="params-body">
                        <button class="push">Pull</button><button class="push">Reset</button>
                        <div class="switch"><button class="sel">Live</button><button>Past</button></div>
                    </div>
                </aside>
            </div>
        </section>
    </main>

    <footer class="playbar">
        <div class="play-left">
            <div class="play-row">
                <button aria-label="First frame"><svg viewBox="0 0 20 14"><path d="M1 1h2v12H1zM11 1v12L4 7zM19 1v12l-7-6z"/></svg></button>
                <button aria-label="Play backwards"><svg viewBox="0 0 20 14"><path d="M15 1v12L5 7z"/></svg></button>
                <button class="sel" aria-label="Stop"><svg viewBox="0 0 20 14"><path d="M4 1h12v12H4z"/></svg></button>
                <button aria-label="Play"><svg viewBox="0 0 20 14"><path d="M5 1v12l10-6z"/></svg></button>
                <button aria-label="Last frame"><svg viewBox="0 0 20 14"><path d="M17 1h2v12h-2zM9 1v12l7-6zM1 1v12l7-6z"/></svg></button>
                <input type="text" value="1" aria-label="Current frame">
                <button class="half" aria-label="Previous key"><svg viewBox="0 0 10 14"><path d="M6 3v8L0 7zM8 4h1v6H8z"/></svg></button>
                <button class="half" aria-label="Next key"><svg viewBox="0 0 10 14"><path d="M4 3v8l6-4zM1 4h1v6H1z"/></svg></button>
            </div>
            <div class="play-row low">
                <button aria-label="Snapshot"><svg viewBox="0 0 20 14"><path d="M4 2h11v10H4z"/><path fill="#111" d="M10 6v8l2-2 4 1z"/></svg></button>
                <button aria-label="Audio"><svg viewBox="0 0 20 14"><g class="line"><path d="M5 5v4M8 4v6"/><ellipse cx="13" cy="7" rx="3" ry="6"/></g></svg></button>
                <button aria-label="Loop"><svg viewBox="0 0 20 14"><path class="line" d="M3 11h13c0-4-2-7-6-7-3 0-5 1-5 4"/></svg></button>
                <button aria-label="Real time"><svg viewBox="0 0 20 14"><g class="line"><circle cx="10" cy="7" r="6"/><path d="M12 5h-3v4h3"/></g></svg></button>
                <button class="faint" aria-label="Range"><svg viewBox="0 0 20 14"><path class="line" d="M3 3v8M7 4l2 3M11 4v3M14 4l-1 3M17 3v8"/></svg></button>
                <button aria-label="Key"><svg viewBox="0 0 20 14"><path class="line" d="M3 8h14"/><path d="M10 5l3 3-3 3-3-3z"/></svg></button>
                <button class="half ghost" aria-label="Previous"><svg viewBox="0 0 20 14"><path class="line" d="M3 3v8M13 3L7 7l6 4"/></svg></button>
                <button class="half ghost" aria-label="Next"><svg viewBox="0 0 20 14"><path class="line" d="M15 3v8M6 3l6 4-6 4"/></svg></button>
            </div>
        </div>
        <div class="time">
            <div class="ruler" id="ruler"><span class="now">1</span></div>
            <div class="range">
                <input type="text" value="1" aria-label="Global start"><input type="text" value="1" aria-label="Start">
                <span class="rail"></span>
                <input class="under" type="text" value="240" aria-label="End"><input type="text" value="248" aria-label="Global end">
                <output class="stamp">3:23.73</output>
            </div>
        </div>
        <div class="keys">
            <div class="key-side"><svg class="ic"><use href="#i-key"/></svg><svg class="ic sm"><use href="#i-down"/></svg></div>
            <div class="key-rows">
                <div><span class="key-ic"><svg class="ic"><use href="#i-chan"/></svg></span><button class="channels">0 keys, 0/0 channels<svg class="ic sm"><use href="#i-up"/></svg></button></div>
                <div><span class="key-ic"><svg class="ic"><use href="#i-wave"/></svg></span><select aria-label="Key mode"><option>Key All Channels</option></select><svg class="ic"><use href="#i-updown"/></svg></div>
            </div>
        </div>
    </footer>

    <!-- video controls -->
    <div class="player">
        <button class="pause" aria-label="Pause"><b></b><b></b></button>
        <input class="seek" type="range" min="0" max="1755" value="373" aria-label="Seek">
        <span class="auto">Auto Update</span>
        <button class="volume" aria-label="Volume"><svg viewBox="0 0 28 22"><path fill="#eae4d8" d="M1 8h4l7-6v18l-7-6H1z"/><path fill="none" stroke="#cfc8ba" stroke-width="2" d="M15 8q2 3 0 6M18 5q5 6 0 12M22 2q6 9 0 18"/></svg></button>
        <svg class="ic"><use href="#i-updown"/></svg>
    </div>

    <script src="script.js"></script>
</body>

</html>
```
FILE: styles.css
```css
* {
    box-sizing: border-box;
}

body {
    display: flex;
    flex-direction: column;
    height: 100vh;
    margin: 0;
    overflow: hidden;
    background-color: #181712;
    color: #a29c90;
    font-family: "Noto Sans CJK SC", "Noto Sans", sans-serif;
    font-size: 12px;
    line-height: 16px;
}

button, input, select {
    font: inherit;
    color: inherit;
    border: none;
    border-radius: 0;
    padding: 0;
    margin: 0;
    background: none;
    min-width: 0;
}

select {
    appearance: none;
}

a {
    color: inherit;
    text-decoration: none;
}

h1, h2, p {
    margin: 0;
    font-size: inherit;
}

svg {
    display: block;
    flex-shrink: 0;
}

.sprite {
    position: absolute;
    width: 0;
    height: 0;
}

.ic {
    width: 18px;
    height: 18px;
    color: #c4beb0;
}

.ic.sm { width: 12px; height: 12px; }
.ic.xs { width: 12px; height: 12px; }
.ic.big { width: 20px; height: 20px; }
.ic.dim { color: #45433c; }

.btn-ic {
    display: flex;
    align-items: center;
}

.end {
    margin-left: auto;
}

.group {
    display: flex;
    align-items: center;
    gap: 6px;
}

/* highlighted tool */
.on {
    display: flex;
    align-items: center;
    justify-content: center;
    width: 23px;
    height: 23px;
    background-color: #4d5059;
}

/* title + main menu */
.titlebar {
    display: grid;
    grid-template-columns: 1fr auto 1fr;
    align-items: center;
    height: 22px;
    padding-right: 5px;
    background-color: #24221d;
    color: #dcd6c9;
}

.titlebar h1 {
    font-size: 14px;
    font-weight: bold;
    white-space: nowrap;
}

.win-dots {
    display: flex;
    gap: 8px;
}

.win-dots.right {
    justify-content: flex-end;
}

.win-dots i {
    width: 16px;
    height: 16px;
    border: 2px solid #3b3934;
    border-radius: 50%;
    background-color: #191814;
}

.menubar {
    display: flex;
    align-items: center;
    gap: 9px;
    height: 28px;
    padding: 0 10px;
    background-color: #1e1c18;
}

.shot {
    margin-right: 19px;
}

.combo {
    display: flex;
    align-items: center;
    gap: 4px;
    width: 130px;
    height: 22px;
    margin-left: -6px;
    padding: 0 4px;
    background-color: #292723;
}

.combo select {
    flex: 1;
}

.combo-take {
    width: 170px;
    margin-left: auto;
}

/* tabs, shared by shelves and panes */
.tabs {
    display: flex;
    align-items: center;
    height: 20px;
    flex-shrink: 0;
    background-color: #14130f;
    font-size: 10px;
}

.tab {
    display: flex;
    align-items: center;
    gap: 14px;
    height: 100%;
    padding: 0 8px 0 4px;
    border-right: 1px solid #080806;
    background-color: #181713;
    white-space: nowrap;
}

.sheet .tab {
    gap: 11px;
}

.tab.active {
    background-color: #292722;
}

.tab:first-child {
    padding-left: 1px;
}

.tab i {
    width: 3px;
    height: 3px;
    background-color: #8a8578;
}

.add {
    color: #ddd;
}

.tabs .end, .tabs .end + .btn-ic {
    padding-right: 4px;
}

/* shelves */
.shelves {
    display: flex;
    height: 58px;
    border-top: 1px solid #0c0b09;
    flex-shrink: 0;
}

.shelf {
    display: flex;
    flex-direction: column;
}

.shelf-left {
    flex: 0 0 50.5%;
    border-right: 9px solid #24221d;
}

.shelf-right {
    flex: 1;
}

.shelf .tabs {
    height: 18px;
    font-size: 9px;
}

.shelf .tab {
    padding: 0 8px;
}

.shelf-items {
    display: flex;
    flex: 1;
    padding-top: 1px;
    background: linear-gradient(#2a2823, #1f1e1a);
}

.shelf-items button {
    display: flex;
    flex-direction: column;
    align-items: center;
    width: 48px;
    font-size: 9px;
    line-height: 10px;
    white-space: nowrap;
    text-align: center;
}

.shelf-items.even button {
    display: block;
    width: 67px;
}

.shelf-items.even .ic {
    margin: 0 auto;
}

.shelf-items .ic {
    width: 17px;
    height: 17px;
}

.shelf-items button.wide {
    width: 65px;
}

.shelf-items button.single {
    line-height: 16px;
}

/* desktop */
.desk {
    display: flex;
    flex: 1;
    min-height: 0;
}

.left {
    display: flex;
    flex-direction: column;
    flex: 0 0 51.3%;
    min-width: 0;
    border-right: 2px solid #0d0c0a;
}

.scene {
    display: flex;
    flex-direction: column;
    flex: 316;
    min-height: 0;
    border-bottom: 6px solid #2a2823;
}

.sheet {
    display: flex;
    flex-direction: column;
    flex: 524;
    min-height: 0;
}

.path {
    display: flex;
    align-items: center;
    gap: 6px;
    height: 33px;
    padding: 0 4px 0 0;
    flex-shrink: 0;
    background-color: #25231f;
}

.path-field {
    display: flex;
    align-items: center;
    gap: 5px;
    flex: 1;
    height: 24px;
    padding: 0 4px;
    border: 1px solid #0b0a08;
    background-color: #201e1a;
}

.path-field .sm {
    margin-left: auto;
    color: #77736a;
}

.path .gap {
    width: 4px;
}

.toolbar {
    display: flex;
    align-items: center;
    height: 31px;
    flex-shrink: 0;
    border-top: 2px solid #0d0c0a;
    background-color: #151410;
}

.view-tools {
    gap: 8px;
    padding: 0 3px 0 8px;
}

.view-tools .mid {
    margin-left: 335px;
    gap: 15px;
}

.view-tools .tight {
    margin-left: 2px;
    gap: 7px;
}

.bar {
    width: 1px;
    height: 27px;
    background-color: #2b2a26;
}

.view-row {
    display: flex;
    flex: 1;
    min-height: 0;
}

.side {
    display: flex;
    flex-direction: column;
    align-items: center;
    justify-content: space-between;
    flex-shrink: 0;
    width: 28px;
    padding: 32px 6px 4px 0;
    background-color: #1a1915;
}

.side-right {
    width: 24px;
    padding: 30px 0 6px;
}

.viewport {
    position: relative;
    flex: 1;
    min-width: 0;
    overflow: hidden;
    background: linear-gradient(#5e676a, #83867f 35%, #a7a395 68%, #c2b8a4);
}

.ground {
    width: 100%;
    height: 100%;
}

.ground line {
    stroke: #3f443f;
    stroke-opacity: .34;
}

.ground line.major {
    stroke-opacity: .6;
}

.view-name {
    position: absolute;
    left: 16px;
    top: 15px;
    display: flex;
    align-items: center;
    gap: 8px;
    color: #eeead9;
    font-size: 14px;
    font-weight: bold;
    text-shadow: 1px 1px 1px #333;
}

.view-name svg {
    width: 26px;
    height: 24px;
}

.pills {
    position: absolute;
    right: 6px;
    top: 5px;
    display: flex;
    gap: 7px;
}

.pills button {
    height: 20px;
    padding: 0 6px;
    border: 1px solid #a3a497;
    border-radius: 10px;
    background-color: #5c615c;
    color: #dedbcd;
    font-size: 11px;
}

.axes {
    position: absolute;
    left: 6px;
    bottom: 8px;
    font-size: 11px;
    line-height: 12px;
    color: #a04a3c;
    font-weight: bold;
}

.axes b {
    display: block;
    padding-left: 8px;
    color: #8fc460;
}

.axes i {
    color: #2525b0;
}

/* geometry spreadsheet */
.sheet-body {
    display: flex;
    flex: 1;
    min-height: 0;
}

.graph {
    display: flex;
    flex-direction: column;
    flex: 0 0 50%;
    min-width: 0;
    border-right: 2px solid #0b0a08;
}

.graph-tools {
    gap: 20px;
    padding: 0 6px 0 2px;
}

.tree-wrap {
    position: relative;
    flex: 1;
    min-height: 0;
    overflow: hidden;
    background-color: #171612;
}

table {
    width: 100%;
    table-layout: fixed;
    border-collapse: collapse;
}

th, td {
    padding: 0;
    text-align: left;
    font-weight: normal;
    white-space: nowrap;
    overflow: hidden;
}

.tree {
    font-size: 11px;
}

.tree th {
    height: 18px;
    background-color: #22201c;
    border-right: 1px solid #0e0d0b;
}

.tree td {
    height: 18px;
    border-right: 1px solid #100f0c;
}

.tree tbody tr:nth-child(odd) {
    background-color: #21201c;
}

.tree tbody tr.hover {
    background-color: #2a2925;
}

.tree tbody tr.selected {
    background-color: #43361a;
    outline: 1px solid #86691f;
    outline-offset: -1px;
}

.tree td:nth-child(2), .tree td:nth-child(4) {
    padding-left: 2px;
}

.tree th:nth-child(n+2):nth-child(-n+4) {
    padding-left: 2px;
}

.tree td:nth-child(3) {
    text-align: right;
}

.tree th:nth-child(n+5), .tree td:nth-child(n+5) {
    text-align: center;
}

.tree th .ic, .tree td .ic {
    margin: 0 auto;
}

.c-prim { width: 39px; }
.c-desc { width: 39px; }
.c-kind { width: 70px; }
.c-flag { width: 14px; }

.cell {
    display: flex;
    align-items: center;
    height: 18px;
}

.mouse {
    position: absolute;
    left: 166px;
    top: 131px;
    width: 20px;
    height: 20px;
    color: #eee;
}

.hscroll {
    display: flex;
    align-items: center;
    justify-content: space-between;
    height: 14px;
    margin-top: 3px;
    background-color: #11100d;
}

.thumb {
    width: 62%;
    height: 12px;
    background-color: #2f2d29;
    color: #0a0a08;
    text-align: center;
    font-weight: bold;
    line-height: 10px;
}

.filter {
    display: flex;
    align-items: center;
    height: 23px;
    gap: 7px;
    margin-top: 1px;
    background-color: #1d1c18;
    font-size: 11px;
}

.filter input[type="checkbox"] {
    appearance: none;
    width: 12px;
    height: 12px;
    background-color: #d5cfc2;
    clip-path: polygon(0 45%, 20% 40%, 40% 70%, 80% 0, 100% 5%, 45% 100%);
}

.filter input[type="text"] {
    flex: 1;
    height: 21px;
    margin-left: 8px;
    background-color: #000;
}

.attrs {
    display: flex;
    flex-direction: column;
    flex: 1;
    min-width: 0;
    border-left: 4px solid #2a2823;
    border-right: 4px solid #2a2823;
}

.attr-tools {
    gap: 4px;
    padding: 0 0 0 6px;
    background-color: #1d1b18;
}

.attr-tools .ic {
    margin: 0 2px;
}

.attr-tools .funnel {
    margin-left: 136px;
}

.attr-tools .end {
    margin-left: auto;
}

.attr-wrap {
    flex: 1;
    min-height: 0;
    overflow: hidden;
    padding-right: 4px;
    background-color: #171612;
}

.attr th {
    height: 26px;
    padding-left: 6px;
    background-color: #11100d;
}

.attr td {
    height: 17px;
    line-height: 16px;
    padding-left: 3px;
    color: #98a09a;
}

.attr tr:nth-child(even) td {
    background-color: #21201c;
}

.attr .root td {
    background-color: #382e17;
    color: #b5a35f;
}

.attr .computed td { color: #564e86; }
.attr .rel td { color: #8b4a42; }
.attr .fallback td { color: #99782a; }

.attr td.leaf {
    padding-left: 27px;
}

.attr .name {
    display: flex;
    align-items: center;
    height: 17px;
    padding-left: 14px;
    border-left: 1px solid #34332e;
}

.attr .has-knob .name {
    margin-left: -6px;
    padding-left: 0;
    gap: 10px;
    border: none;
}

.attr .root .name {
    padding-left: 2px;
    gap: 8px;
    border: none;
}

.c-name { width: 189px; }

.attr-filter {
    display: flex;
    align-items: center;
    height: 23px;
    padding-left: 6px;
    background-color: #000;
}

/* network editor */
.network {
    display: flex;
    flex-direction: column;
    flex: 1;
    min-width: 0;
    padding: 5px 5px 0 0;
    border-left: 6px solid #24221d;
    background-color: #24221d;
}

.network .tabs {
    height: 22px;
}

.network .tab {
    padding-left: 6px;
    gap: 18px;
}

.network .path {
    height: 32px;
}

.net-menu {
    display: flex;
    align-items: center;
    gap: 13px;
    height: 25px;
    padding: 0 1px 0 18px;
    border-top: 1px solid #0d0c0a;
    background-color: #1a1915;
}

.net-menu .group {
    margin-left: 10px;
}

.net-menu a + .group {
    margin-left: auto;
}

.canvas {
    position: relative;
    flex: 1;
    overflow: hidden;
    background-color: #181712;
}

.watermark {
    position: absolute;
    left: 399px;
    top: 17px;
    color: #34322e;
    font-size: 24px;
    line-height: 26px;
    font-weight: bold;
}

.netbox {
    position: absolute;
    border-radius: 6px;
    overflow: hidden;
}

.netbox h2, .sticky h2 {
    display: flex;
    align-items: center;
    gap: 4px;
    height: 14px;
    padding-left: 5px;
    font-size: 9px;
    font-weight: normal;
    color: #101015;
}

.netbox h2 b, .sticky h2 b {
    width: 8px;
    height: 2px;
    background-color: #15151a;
}

.gather {
    left: 127px;
    top: 63px;
    width: 248px;
    height: 232px;
    border: 3px solid #a9ad54;
    background-color: #3b4561;
}

.gather h2 {
    background-color: #505a98;
}

.lighting {
    left: 128px;
    top: 349px;
    width: 245px;
    height: 284px;
    background-color: #524009;
}

.lighting h2 {
    background-color: #7b5d08;
}

.sticky {
    position: absolute;
    left: 388px;
    width: 208px;
    border-radius: 4px;
    overflow: hidden;
    background-color: #6b6459;
    color: #0b0a07;
}

.sticky h2 {
    height: 12px;
    background-color: #81786b;
}

.sticky p {
    padding: 2px 3px;
    font-size: 8px;
    line-height: 12px;
    white-space: pre;
}

.note-shot {
    top: 65px;
    height: 229px;
}

.note-light {
    top: 349px;
    height: 112px;
}

.wires {
    position: absolute;
    left: 149px;
    top: 55px;
    width: 300px;
    height: 640px;
}

.node-name {
    position: absolute;
    left: 243px;
    font-size: 9px;
    color: #8f9095;
}

.node-info {
    position: absolute;
    left: 243px;
    top: 126px;
    font-size: 8px;
    line-height: 11px;
    color: #74819a;
    white-space: nowrap;
}

.n-pile { top: 102px; }
.n-edit { top: 176px; }
.n-pop { top: 224px; }
.n-prune { top: 308px; }
.n-start { top: 382px; left: 236px; }
.n-ends { top: 588px; left: 236px; }

.params {
    position: absolute;
    right: 0;
    top: 0;
    width: 430px;
    height: 126px;
    background-color: #23211d;
}

.params-head {
    display: flex;
    align-items: center;
    gap: 7px;
    height: 28px;
    padding: 0 2px 0 4px;
    font-weight: bold;
    font-size: 11px;
}

.params-head input {
    flex: 1;
    height: 22px;
    padding-left: 3px;
    margin-right: 4px;
    background-color: #000;
    font-family: "DejaVu Sans Mono", monospace;
    font-weight: normal;
    font-size: 12px;
}

.params-head .ic {
    width: 19px;
}

.params-head .ic:first-child {
    width: 15px;
}

.params-path {
    display: flex;
    height: 19px;
    padding: 0 2px;
    border-top: 1px solid #35332e;
    border-bottom: 1px solid #0d0c0a;
    font-size: 11px;
    white-space: nowrap;
}

.params-path span:nth-child(1) {
    width: 30%;
}

.params-path span:nth-child(3) {
    margin-left: auto;
}

.params-body {
    display: flex;
    align-items: center;
    gap: 5px;
    padding: 19px 2px 0 155px;
    font-size: 11px;
}

.push {
    width: 52px;
    height: 20px;
    background-color: #2f2d28;
    border-bottom: 2px solid #171612;
}

.push + .push {
    width: 61px;
}

.switch {
    display: flex;
    margin-left: auto;
    margin-right: 10px;
}

.switch button {
    width: 29px;
    height: 24px;
    background-color: #1b1a17;
}

.switch .sel {
    background-color: #555967;
}

/* playbar */
.playbar {
    display: flex;
    height: 65px;
    flex-shrink: 0;
    border-top: 2px solid #2f2d28;
    background-color: #171612;
}

.play-left {
    display: flex;
    flex-direction: column;
    justify-content: space-between;
    width: 229px;
    padding: 7px 0 0 9px;
}

.play-row {
    display: flex;
    gap: 1px;
    height: 27px;
}

.play-row.low {
    height: 20px;
}

.play-row button {
    display: flex;
    align-items: center;
    justify-content: center;
    width: 26px;
    background-color: #2a2824;
}

.play-row button.half {
    width: 14px;
}

.play-row button.sel {
    background-color: #535a68;
}

.play-row button.ghost {
    width: 21px;
    margin-left: 2px;
    background-color: #1c1b17;
}

.play-row svg {
    width: 20px;
    height: 14px;
    fill: #d5cfc2;
}

.play-row .half svg {
    width: 12px;
}

.play-row .line {
    fill: none;
    stroke: #c9c3b5;
    stroke-width: 2;
}

.play-row .faint .line, .play-row .ghost .line {
    stroke: #55524a;
    stroke-width: 1;
}

.play-row input {
    width: 46px;
    margin: 0 2px 0 4px;
    padding-left: 4px;
    background-color: #000;
}

.time {
    display: flex;
    flex-direction: column;
    justify-content: space-between;
    flex: 1;
    min-width: 0;
}

.ruler {
    position: relative;
    height: 40px;
    overflow: hidden;
    background: linear-gradient(#5a5850, #5a5850) 0 21px / 100% 2px no-repeat;
}

/* frame marks are placed along the ruler by their frame number */
.tick {
    position: absolute;
    top: 18px;
    width: 1px;
    height: 9px;
    background-color: #6a675e;
}

.tick.major {
    top: 15px;
    height: 15px;
}

.tick-label {
    position: absolute;
    top: -2px;
    color: #77736a;
    font-size: 10px;
}

.now {
    position: absolute;
    left: 0;
    top: 1px;
    width: 26px;
    height: 19px;
    border: 1px solid #a09b8e;
    background-color: #000;
    text-align: center;
    z-index: 1;
}

.range {
    position: relative;
    display: flex;
    align-items: center;
    height: 20px;
}

.range input {
    width: 42px;
    height: 18px;
    margin-right: 5px;
    padding-left: 4px;
    background-color: #0b0a08;
}

.range .under {
    color: #5d5a52;
}

.rail {
    flex: 1;
    height: 2px;
    background-color: #4f4d45;
}

.rail::before {
    content: "";
    display: block;
    width: 0;
    margin-top: -5px;
    border: 6px solid transparent;
    border-left-color: #8e8a7f;
    border-right: none;
}

.stamp {
    position: absolute;
    right: 36px;
    top: -9px;
    width: 85px;
    height: 17px;
    background-color: #1f1d19;
    color: #f2ece0;
    font-size: 14px;
    line-height: 17px;
    font-weight: bold;
    text-align: center;
}

.keys {
    display: flex;
    width: 255px;
}

.key-side {
    display: flex;
    align-items: center;
    gap: 10px;
    padding: 4px 11px 0 16px;
}

.key-side .ic {
    color: #45433c;
}

.key-rows {
    flex: 1;
    display: flex;
    flex-direction: column;
    gap: 5px;
    padding: 9px 8px 0 0;
}

.key-rows > div {
    display: flex;
    gap: 6px;
    height: 22px;
    align-items: center;
}

.key-ic {
    padding: 2px;
    background-color: #34322b;
}

.channels, .key-rows select {
    display: flex;
    align-items: center;
    flex: 1;
    height: 22px;
    padding: 0 4px 0 14px;
    background-color: #2f2d28;
    font-size: 11px;
}

.channels .ic {
    margin-left: auto;
}

/* player overlay strip */
.player {
    position: relative;
    display: flex;
    align-items: center;
    height: 43px;
    flex-shrink: 0;
    padding-right: 6px;
    border-bottom: 1px solid #33312b;
    background-color: #1c1b17;
}

.pause {
    display: flex;
    justify-content: center;
    gap: 4px;
    width: 87px;
    height: 100%;
    padding: 9px 0 9px;
    background: linear-gradient(90deg, #000 20px, #171612 20px, #171612 66px, #000 66px);
}

.pause b {
    width: 7px;
    background-color: #ddd5c7;
}

.seek {
    flex: 1;
    height: 37px;
    appearance: none;
    background: linear-gradient(90deg, #b7a895 21.2%, transparent 21.2%), linear-gradient(#62584e, #857b6c);
}

.seek::-webkit-slider-thumb {
    appearance: none;
    width: 1px;
    height: 37px;
    background-color: #b7a895;
}

.auto {
    position: absolute;
    right: 83px;
    bottom: 12px;
    color: #8d8373;
}

.volume {
    width: 46px;
    padding-left: 10px;
}

.volume svg {
    width: 28px;
    height: 20px;
}

.player > .ic {
    margin-left: 8px;
}
```
FILE: script.js
```js
const NS = 'http://www.w3.org/2000/svg';

// name, tree level, icon, descendants, extra row class
const prims = [
    ['Favorites', 0, 'fav', ''],
    ['/', 0, 'world', 22],
    ['__shotpile', 1, 'pile', 22],
    ['assets', 2, 'ring', 8],
    ['_hsosTrain', 3, 'ring', 7],
    ['_lookdev', 4, 'ring', 3],
    ['_hsosTrain_lookdev_usd_', 5, 'orange', 2, 'hover'],
    ['_model', 4, 'ring', 3],
    ['_hsosTrain_model_A', 5, 'orange', 2],
    ['shots', 2, 'ring', 13],
    ['_FMX_026_010', 3, 'ring', 6],
    ['_layout', 4, 'ring', 5],
    ['_FMX_026_010_camera_l', 5, 'green', 2],
    ['_FMX_026_010_layout_ca', 5, 'green', 2],
    ['_FMX_026_020', 3, 'ring', 6, 'selected'],
    ['_layout', 4, 'ring', 5],
    ['_FMX_026_020_camera_l', 5, 'green', 2],
    ['_FMX_026_020_layout_ca', 5, 'green', 2]
];

function ring(x) {
    return `<circle cx="${x}" cy="9" r="6.500" fill="none" stroke="#55534d" stroke-width="2"/>`;
}

function primIcon(type, x) {
    if (type === 'fav') return `<path fill="#a4ac3c" d="M${x - 5} 5l5-3 5 2v6l-5 4-5-2z"/><circle cx="${x + 1}" cy="6" r="3" fill="#d9dc86"/>`;
    if (type === 'world') return `<circle cx="${x}" cy="9" r="5" fill="#ddd4c4"/><path fill="none" stroke="#5a554b" d="M${x - 3} 5q5 2 5 8"/>`;
    if (type === 'pile') return `<path fill="#cdc3b2" d="M${x - 7} 4l3-2h8l3 2v10H${x - 7}z"/><path stroke="#857c6d" d="M${x - 7} 6h14M${x - 7} 10h14"/>` + ring(x + 18);
    if (type === 'ring') return ring(x);
    const color = type === 'green' ? '#6aa53c' : '#b07a22';
    return `<circle cx="${x}" cy="9" r="7" fill="${color}" opacity=".4"/><circle cx="${x}" cy="9" r="4.500" fill="${color}"/>`;
}

// Is there another row on this level further down the same branch?
function continues(index, level) {
    for (let i = index + 1; i < prims.length; i++) {
        if (prims[i][1] < level) return false;
        if (prims[i][1] === level) return true;
    }
    return false;
}

function branch(index) {
    const [, level, type] = prims[index];
    const x = 3 + level * 18;
    const width = x + (type === 'pile' ? 50 : 31);
    let lines = '';
    for (let l = 0; l < level; l++) {
        if (continues(index, l)) lines += `M${3 + l * 18} 0v18`;
    }
    lines += `M${x} 0V${continues(index, level) ? 18 : 9}M${x} 9h12`;
    let out = `<svg width="${width}" height="18"><path stroke="#6b685f" d="${lines}"/>`;
    out += primIcon(type, x + 19);
    if (type !== 'fav') {
        out += `<circle cx="${x}" cy="9" r="4.500" fill="#d3ccbe"/><path stroke="#1b1a16" stroke-width="2" d="M${x - 2} 9h4"/>`;
    }
    return out + '</svg>';
}

function icon(name) {
    return `<svg class="ic sm"><use href="#${name}"/></svg>`;
}

let treeHtml = prims.map((p, i) => {
    const flags = i > 1 ? [icon('i-power'), icon('i-eye'), '·', icon('i-cursor')] : ['', '', '', ''];
    return `<tr class="${p[4] || ''}"><td><div class="cell">${branch(i)}${p[0]}</div></td>
        <td>${i > 1 ? 'Scope' : ''}</td><td>${p[3]}</td><td></td><td></td><td></td>
        ${flags.map(f => `<td>${f}</td>`).join('')}</tr>`;
}).join('');
for (let i = 0; i < 3; i++) {
    treeHtml += '<tr>' + '<td></td>'.repeat(10) + '</tr>';
}
document.getElementById('treeRows').innerHTML = treeHtml;

const knob = '<svg width="11" height="11"><circle cx="5.500" cy="5.500" r="5" fill="#d8d0b8"/><path stroke="#222" stroke-width="2" d="M3.500 5.500h4"/></svg>';

const attrs = [
    ['/__shotpile/shots/_FMX_02...', '', 'root'],
    ['Computed Purpose', 'default', 'computed'],
    ['Computed Visibility', 'inherited', 'computed'],
    ['Local to World Transform', 'T(0.0, 0.0, 0.0) R(0.0, -0.0, 0.0) S(1.0, 1.0, 1.0)', 'computed'],
    ['World Bounding Box', 'Min[3.40282e+38 3.40282e+38 3.40282e+38] Max[-...', 'computed'],
    ['Resolved Preview Material', '&lt;unbound&gt;', 'computed'],
    ['Resolved Full Material', '&lt;unbound&gt;', 'computed'],
    ['Assets', '', 'rel has-knob'],
    ['proxyPrim', '', 'rel'],
    ['global:code', 'FMX_026_020', ''],
    ['global:id', '81,176', ''],
    ['global:sg_episode', 'FMX', ''],
    ['global:sg_sequence', 'FMX_026', ''],
    ['milk:cast', '{\\n&nbsp; "build_id": 4,\\n&nbsp; "Assets": {\\n&nbsp; &nbsp; "hsosTrain": [\\n...', ''],
    ['milk:latest_of_status', 'inherited', ''],
    ['purpose', 'default', 'fallback'],
    ['res:shot_res_delivery', '( 4,608, 3,164 )', ''],
    ['res:show_res_delivery', '( 3,840, 2,160 )', ''],
    ['time:fps_project', '23.976', ''],
    ['time:sg_work_in', '1,001', ''],
    ['time:sg_work_out', '1,051', ''],
    ['visibility', 'inherited', 'fallback']
];

document.getElementById('attrRows').innerHTML = attrs.map(([name, value, cls]) => {
    const lead = cls === 'root' || cls.includes('has-knob') ? knob : '';
    return `<tr class="${cls}"><td class="${cls === 'root' ? '' : 'leaf'}"><div class="name">${lead}${name}</div></td><td>${value}</td></tr>`;
}).join('');

// Ground plane: one major cell split in five, seen along its diagonal
const ground = document.querySelector('.ground');

function project(i, j) {
    const s = 1 / (0.0037736 + 0.00038 * (i + j));
    return [493 + (i - j) * s / 2, -307 + 615 * s / 265];
}

function groundLine(a, b, major) {
    const line = document.createElementNS(NS, 'line');
    line.setAttribute('x1', a[0]);
    line.setAttribute('y1', a[1]);
    line.setAttribute('x2', b[0]);
    line.setAttribute('y2', b[1]);
    if (major) line.setAttribute('class', 'major');
    ground.appendChild(line);
}

for (let k = -25; k <= 25; k++) {
    const c = k / 5;
    groundLine(project(c, -5 - c), project(c, 6 - c), k % 5 === 0);
    groundLine(project(-5 - c, c), project(6 - c, c), k % 5 === 0);
}

// Timeline marks every 6 frames, labels every 24
const ruler = document.getElementById('ruler');
for (let frame = 6; frame <= 240; frame += 6) {
    const left = (frame - 1) / 239.7 * 100;
    const major = frame % 24 === 0;
    const label = frame === 240 ? '2' : frame;
    let html = `<span class="tick ${major ? 'major' : ''}" style="left: ${left}%"></span>`;
    if (major) html += `<span class="tick-label" style="left: ${left}%">${label}</span>`;
    ruler.insertAdjacentHTML('beforeend', html);
}
```
